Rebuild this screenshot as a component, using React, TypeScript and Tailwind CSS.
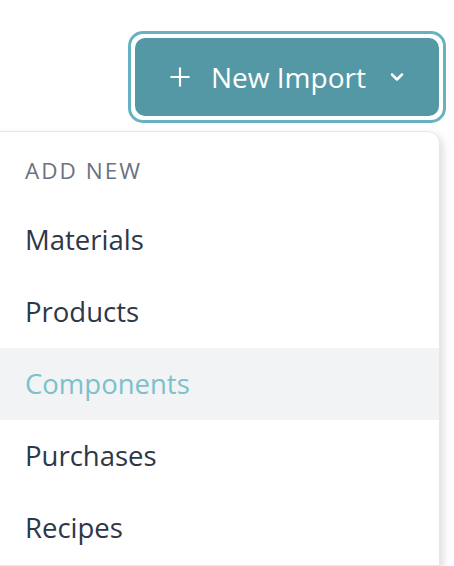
import { Plus, ChevronDown } from 'lucide-react';

const items = ['Materials', 'Products', 'Components', 'Purchases', 'Recipes'];

export default function App() {
  const active = 'Components';

  return (
    <div
      className="w-[454px] h-[566px] overflow-hidden bg-white flex flex-col items-end"
      style={{ fontFamily: '"Open Sans", sans-serif' }}
    >
      <div className="mt-[31px] mr-[8px] rounded-[15px] border-[3px] border-[#67b2c1] p-[4px]">
        <button className="flex items-center h-[78px] w-[304px] pl-[30px] pr-[32px] rounded-[10px] bg-[#5598a5] text-white">
          <Plus className="w-[30px] h-[30px]" strokeWidth={1.7} />
          <span className="ml-[16px] text-[28px] leading-none">New Import</span>
          <ChevronDown className="ml-auto w-[20px] h-[20px]" strokeWidth={3} />
        </button>
      </div>

      <div className="mt-[8px] mr-[14px] -ml-4 self-stretch flex-1 rounded-tr-[12px] border border-[#e5e7eb] bg-white shadow-[3px_4px_8px_rgba(0,0,0,0.14)]">
        <div className="pl-[40px] pt-[26px] pb-[20px] text-[22.5px] leading-[26px] tracking-[0.09em] uppercase text-[#6b7280]">
          Add New
        </div>
        {items.map((item) => (
          <div
            key={item}
            className={
              item === active
                ? 'h-[72px] pl-[40px] flex items-center text-[27.5px] bg-[#f2f3f5] text-[#7cc0cc]'
                : 'h-[72px] pl-[40px] flex items-center text-[27.5px] text-[#2d3748]'
            }
          >
            {item}
          </div>
        ))}
      </div>
    </div>
  );
}
